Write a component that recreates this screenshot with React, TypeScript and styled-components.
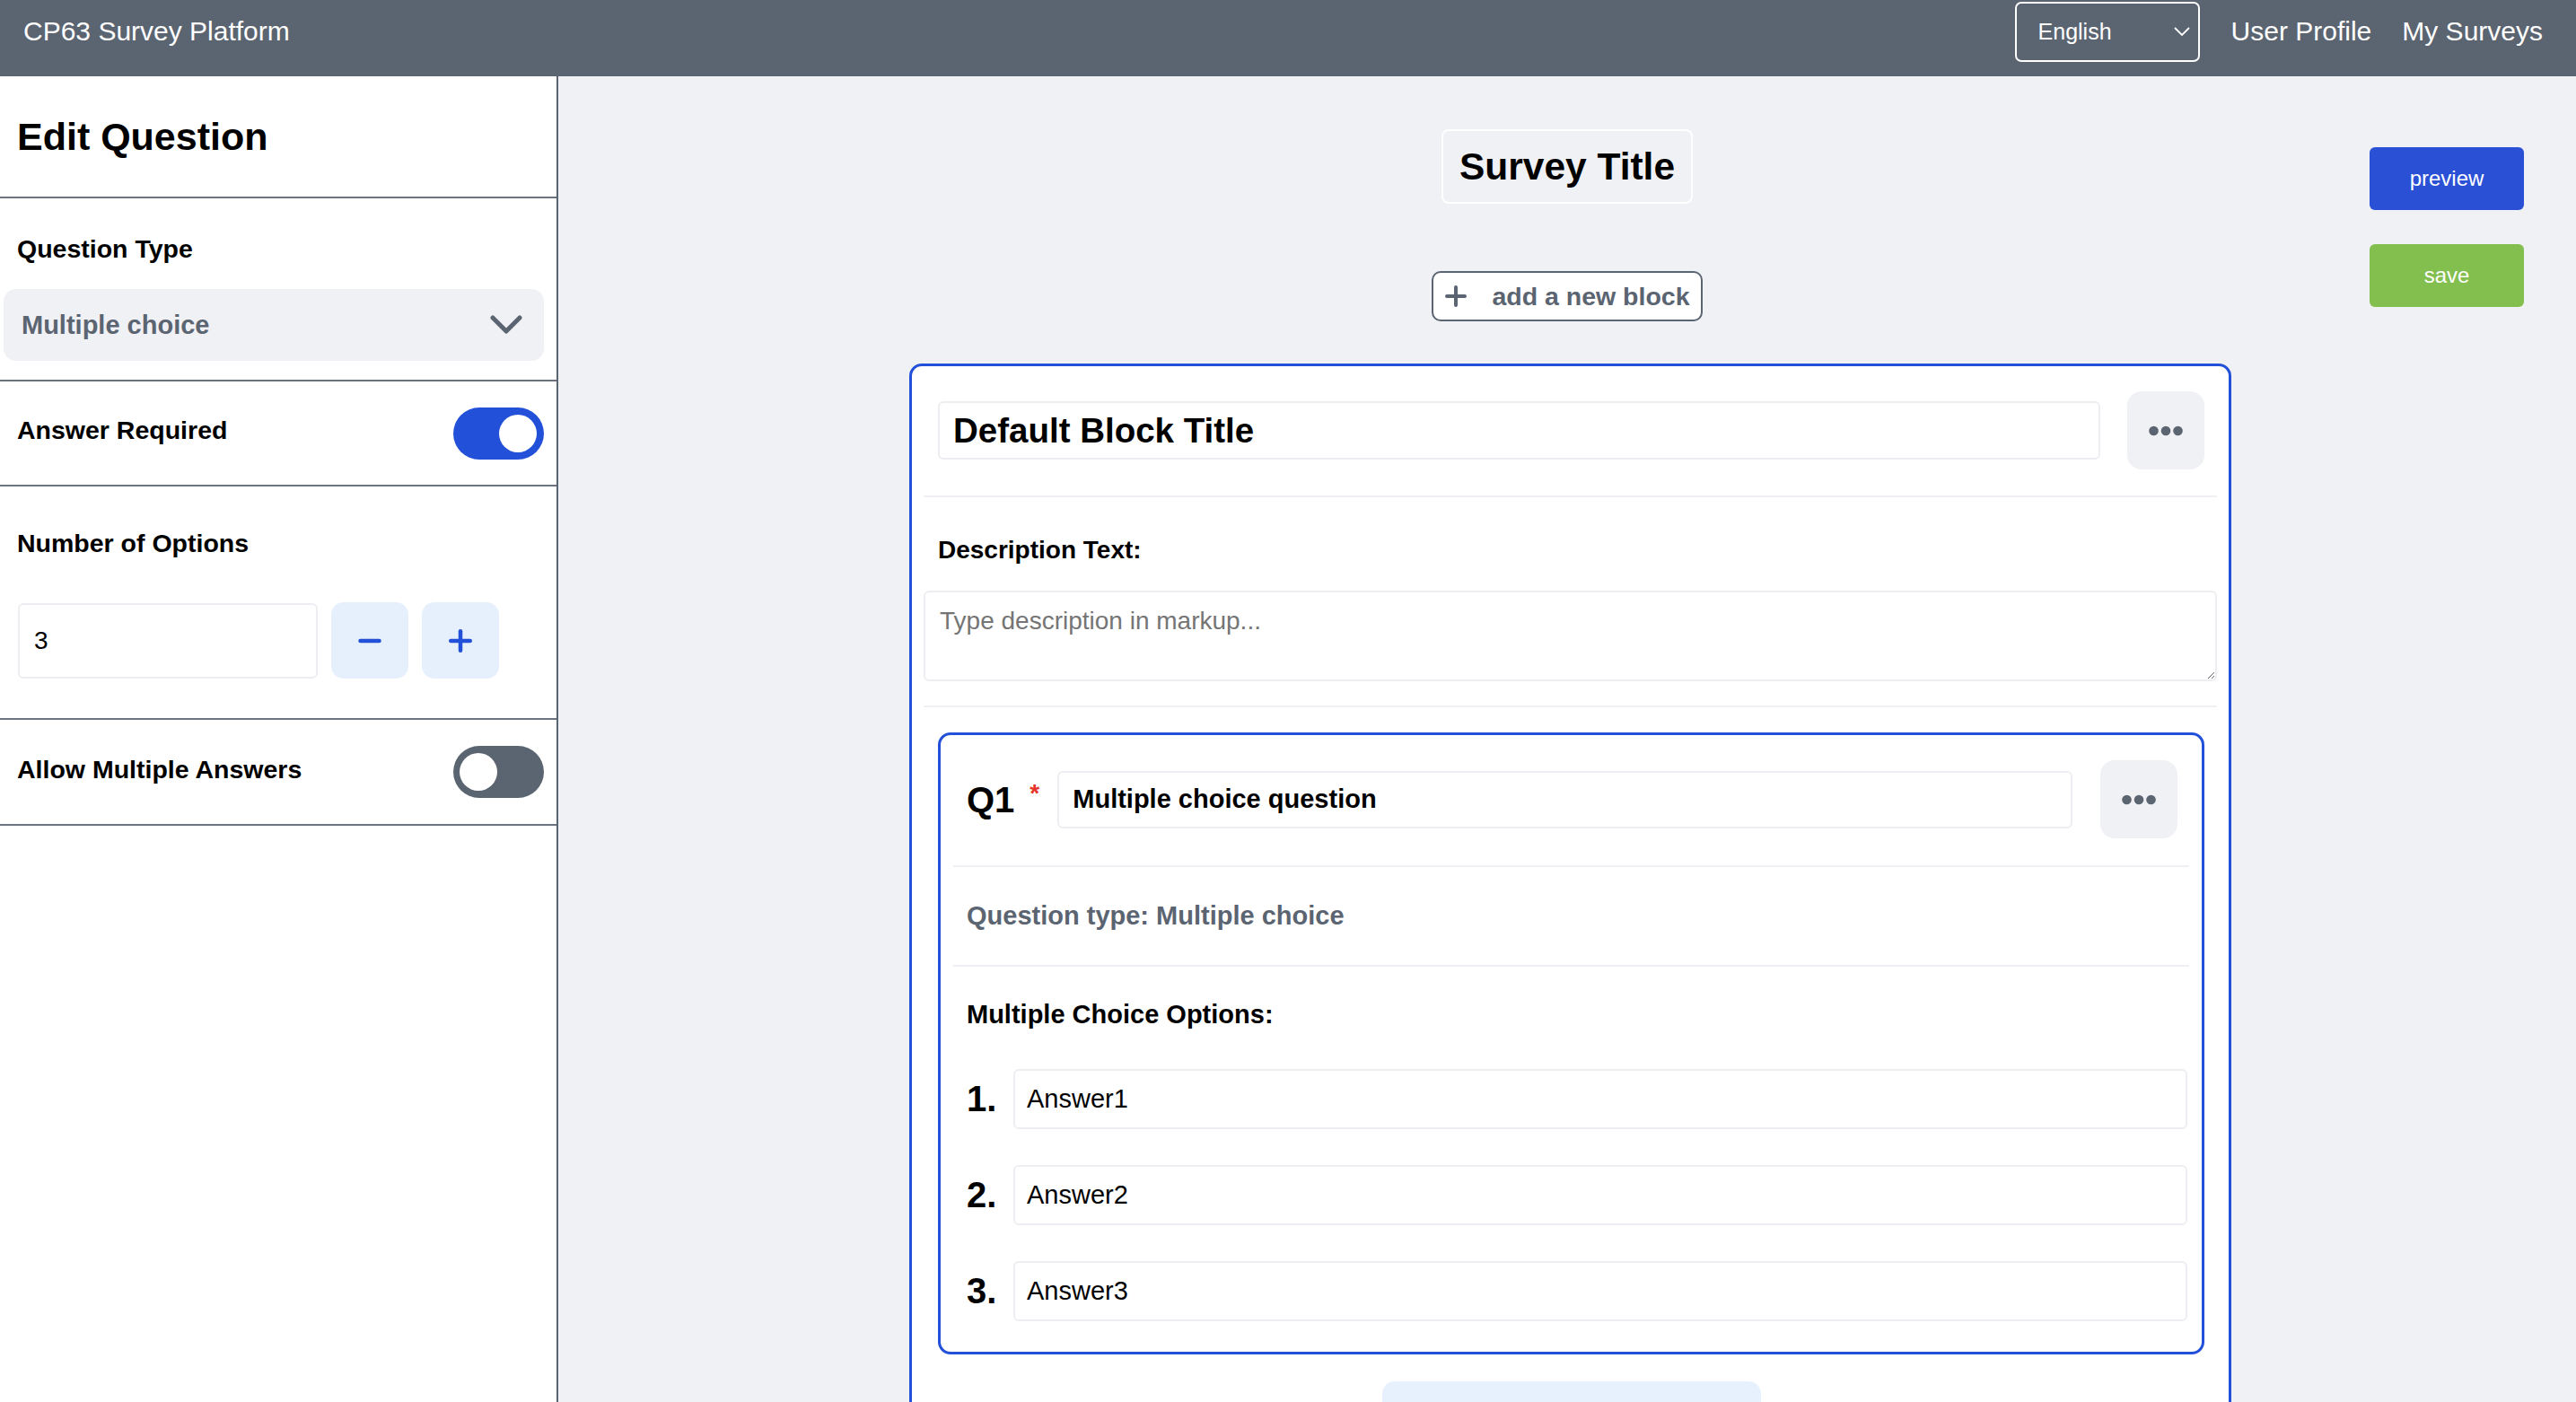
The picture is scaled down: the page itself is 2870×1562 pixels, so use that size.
import React from "react";
import styled, { createGlobalStyle } from "styled-components";

const GlobalStyle = createGlobalStyle`
  html, body { margin: 0; padding: 0; height: 100%; overflow: hidden; }
  body { font-family: "Liberation Sans", Arial, Helvetica, sans-serif; background: #f0f1f5; color: #000; }
  * { box-sizing: border-box; }
  #root { height: 100%; }
`;

const Page = styled.div`
  height: 100vh;
  display: flex;
  flex-direction: column;
`;

/* ---------- top bar ---------- */
const TopBar = styled.header`
  height: 85px;
  flex: none;
  background: #5b6471;
  color: #fff;
  display: flex;
  align-items: center;
  padding: 0 37px 15px 26px;
`;

const Brand = styled.div`
  font-size: 30px;
  line-height: 34px;
`;

const Nav = styled.nav`
  margin-left: auto;
  display: flex;
  align-items: center;
  gap: 34px;
`;

const LangSelect = styled.div`
  width: 206px;
  height: 67px;
  margin-right: 1px;
  border: 2px solid #fff;
  border-radius: 7px;
  display: flex;
  align-items: center;
  justify-content: space-between;
  padding: 0 8px 0 24px;
  font-size: 25px;
`;

const NavLink = styled.a`
  font-size: 30px;
  line-height: 34px;
  color: #fff;
  text-decoration: none;
`;

/* ---------- body ---------- */
const Body = styled.div`
  flex: 1;
  min-height: 0;
  display: flex;
`;

const Sidebar = styled.aside`
  width: 622px;
  flex: none;
  background: #fff;
  border-right: 2px solid #5b6471;
  display: flex;
  flex-direction: column;
`;

const SideHeading = styled.div`
  height: 136px;
  display: flex;
  align-items: center;
  padding-left: 19px;
  border-bottom: 2px solid #6b7380;
  font-size: 43px;
  font-weight: 700;
`;

const SideBlock = styled.div<{ $pad: string }>`
  padding: ${(p) => p.$pad};
  border-bottom: 2px solid #6b7380;
`;

const SideRow = styled.div<{ $h: number }>`
  height: ${(p) => p.$h}px;
  display: flex;
  align-items: center;
  justify-content: space-between;
  padding: 0 14px 0 19px;
  border-bottom: 2px solid #6b7380;
`;

const SideLabel = styled.div<{ $indent?: number; $lift?: number }>`
  font-size: 28.5px;
  line-height: 34px;
  font-weight: 700;
  padding-left: ${(p) => p.$indent ?? 0}px;
  margin-bottom: ${(p) => p.$lift ?? 0}px;
`;

const TypeSelect = styled.div`
  margin-top: 28px;
  height: 80px;
  border-radius: 14px;
  background: #f0f1f5;
  display: flex;
  align-items: center;
  justify-content: space-between;
  padding: 0 24px 0 20px;
  color: #5b6471;
  font-size: 29px;
  font-weight: 700;
`;

const Toggle = styled.span<{ $on: boolean }>`
  position: relative;
  width: 101px;
  height: 58px;
  border-radius: 29px;
  background: ${(p) => (p.$on ? "#2350d8" : "#5b6471")};
  flex: none;
  &::after {
    content: "";
    position: absolute;
    top: 8px;
    left: ${(p) => (p.$on ? "51px" : "7px")};
    width: 42px;
    height: 42px;
    border-radius: 50%;
    background: #fff;
  }
`;

const StepperRow = styled.div`
  margin-top: 49px;
  display: flex;
  align-items: center;
  gap: 15px;
  padding-left: 1px;
`;

const NumberInput = styled.input`
  width: 334px;
  height: 84px;
  border: 2px solid #eceef1;
  border-radius: 6px;
  padding: 0 16px;
  font-family: inherit;
  font-size: 28px;
  color: #000;
  outline: none;
`;

const StepButton = styled.button`
  width: 86px;
  height: 85px;
  border: none;
  border-radius: 14px;
  background: #e6f0fd;
  display: flex;
  align-items: center;
  justify-content: center;
  padding: 0;
`;

/* ---------- main canvas ---------- */
const Main = styled.main`
  flex: 1;
  min-width: 0;
  overflow: hidden;
  background: #f0f1f5;
  display: grid;
  grid-template-columns: 1fr 1473px 1fr;
  align-items: start;
  padding-top: 59px;
`;

const Canvas = styled.div`
  grid-column: 2;
  display: flex;
  flex-direction: column;
  align-items: center;
`;

const SurveyTitle = styled.div`
  height: 83px;
  padding: 0 18px;
  border: 2px solid #fff;
  border-radius: 8px;
  display: flex;
  align-items: center;
  font-size: 42.5px;
  font-weight: 700;
`;

const AddBlockButton = styled.button`
  margin-top: 75px;
  height: 56px;
  padding: 0 12px 0 13px;
  border: 2px solid #5b6471;
  border-radius: 10px;
  background: #fff;
  display: flex;
  align-items: center;
  gap: 28px;
  font-family: inherit;
  font-size: 28.5px;
  font-weight: 700;
  color: #5b6471;
`;

const BlockCard = styled.section`
  margin: 47px 0 0 7px;
  width: 1473px;
  flex: none;
  background: #fff;
  border: 3px solid #2350d8;
  border-radius: 14px;
  padding: 0 13px;
`;

const BlockHeader = styled.div`
  display: flex;
  align-items: center;
  gap: 30px;
  padding: 28px 14px 29px 16px;
  border-bottom: 2px solid #eef0f3;
`;

const TitleInput = styled.input`
  flex: 1;
  min-width: 0;
  height: 65px;
  border: 2px solid #eceef1;
  border-radius: 6px;
  padding: 0 15px;
  font-family: inherit;
  font-size: 38.5px;
  font-weight: 700;
  color: #000;
  outline: none;
`;

const MoreButton = styled.button`
  width: 86px;
  height: 87px;
  flex: none;
  border: none;
  border-radius: 16px;
  background: #f0f1f5;
  display: flex;
  align-items: center;
  justify-content: center;
  padding: 0;
`;

const DescSection = styled.div`
  padding: 42px 0 27px;
  border-bottom: 2px solid #eef0f3;
`;

const FieldLabel = styled.div<{ $indent?: number; $size?: number; $muted?: boolean }>`
  padding-left: ${(p) => p.$indent ?? 0}px;
  font-size: ${(p) => p.$size ?? 28}px;
  line-height: 34px;
  font-weight: 700;
  color: ${(p) => (p.$muted ? "#5b6471" : "#000")};
`;

const DescArea = styled.textarea`
  display: block;
  margin-top: 28px;
  width: 100%;
  height: 101px;
  border: 2px solid #eceef1;
  border-radius: 6px;
  padding: 15px 16px;
  font-family: inherit;
  font-size: 28px;
  line-height: 34px;
  outline: none;
  &::placeholder { color: #757575; }
`;

const QuestionSection = styled.div`
  padding: 28px 14px 0 16px;
  display: flex;
  flex-direction: column;
  align-items: center;
`;

const QuestionCard = styled.div`
  width: 100%;
  border: 3px solid #2350d8;
  border-radius: 14px;
  padding: 0 14px;
`;

const QHeader = styled.div`
  display: flex;
  align-items: center;
  padding: 28px 13px 30px 15px;
  border-bottom: 2px solid #eef0f3;
`;

const QNumber = styled.span`
  font-size: 40px;
  line-height: 46px;
  font-weight: 700;
  flex: none;
`;

const Required = styled.span`
  font-size: 28px;
  line-height: 32px;
  font-weight: 700;
  color: #e5352b;
  vertical-align: top;
  margin-left: 17px;
`;

const QInput = styled.input`
  flex: 1;
  min-width: 0;
  height: 64px;
  margin: 0 31px 0 20px;
  border: 2px solid #eceef1;
  border-radius: 6px;
  padding: 0 15px;
  font-family: inherit;
  font-size: 29px;
  font-weight: 700;
  color: #000;
  outline: none;
`;

const QTypeSection = styled.div`
  padding: 37px 0 38px 15px;
  border-bottom: 2px solid #eef0f3;
`;

const OptionsSection = styled.div`
  padding: 36px 2px 34px 15px;
`;

const OptionList = styled.ol`
  list-style: none;
  margin: 44px 0 0;
  padding: 0;
  display: flex;
  flex-direction: column;
  gap: 40px;
`;

const OptionRow = styled.li`
  display: flex;
  align-items: center;
`;

const OptionNum = styled.span`
  width: 52px;
  flex: none;
  font-size: 40px;
  font-weight: 700;
`;

const OptionInput = styled.input`
  flex: 1;
  min-width: 0;
  height: 67px;
  border: 2px solid #eceef1;
  border-radius: 6px;
  padding: 0 13px;
  font-family: inherit;
  font-size: 29px;
  color: #000;
  outline: none;
`;

const AddQuestionButton = styled.button`
  margin-top: 30px;
  width: 422px;
  height: 80px;
  border: none;
  border-radius: 14px;
  background: #e7f1fd;
`;

const Actions = styled.div`
  grid-column: 3;
  justify-self: end;
  margin: 20px 58px 0 0;
  display: flex;
  flex-direction: column;
  gap: 38px;
`;

const ActionButton = styled.button<{ $tone: "blue" | "green" }>`
  width: 172px;
  height: 70px;
  border: none;
  border-radius: 6px;
  background: ${(p) => (p.$tone === "blue" ? "#2a50d6" : "#83bf4f")};
  color: #fff;
  font-family: inherit;
  font-size: 24px;
`;

/* ---------- icons ---------- */
const Dots = () => (
  <svg width="38" height="12" viewBox="0 0 38 12">
    <circle cx="5.5" cy="6" r="5.3" fill="#5b6471" />
    <circle cx="19" cy="6" r="5.3" fill="#5b6471" />
    <circle cx="32.5" cy="6" r="5.3" fill="#5b6471" />
  </svg>
);

const ThinChevron = () => (
  <svg width="20" height="12" viewBox="0 0 20 12">
    <polyline points="2,2 10,10 18,2" fill="none" stroke="#fff" strokeWidth="1.8" />
  </svg>
);

const BoldChevron = () => (
  <svg width="36" height="22" viewBox="0 0 36 22">
    <polyline points="3,3 18,18 33,3" fill="none" stroke="#5b6471" strokeWidth="5" strokeLinecap="round" strokeLinejoin="round" />
  </svg>
);

const PlusIcon = ({ color, size, stroke }: { color: string; size: number; stroke: number }) => (
  <svg width={size} height={size} viewBox={`0 0 ${size} ${size}`}>
    <line x1={size / 2} y1={stroke / 2} x2={size / 2} y2={size - stroke / 2} stroke={color} strokeWidth={stroke} strokeLinecap="round" />
    <line x1={stroke / 2} y1={size / 2} x2={size - stroke / 2} y2={size / 2} stroke={color} strokeWidth={stroke} strokeLinecap="round" />
  </svg>
);

const MinusIcon = () => (
  <svg width="26" height="6" viewBox="0 0 26 6">
    <line x1="2.5" y1="3" x2="23.5" y2="3" stroke="#2350d8" strokeWidth="4.5" strokeLinecap="round" />
  </svg>
);

const options = ["Answer1", "Answer2", "Answer3"];

export default function App() {
  return (
    <>
      <GlobalStyle />
      <Page>
        <TopBar>
          <Brand>CP63 Survey Platform</Brand>
          <Nav>
            <LangSelect>
              English
              <ThinChevron />
            </LangSelect>
            <NavLink href="#">User Profile</NavLink>
            <NavLink href="#">My Surveys</NavLink>
          </Nav>
        </TopBar>

        <Body>
          <Sidebar>
            <SideHeading>Edit Question</SideHeading>

            <SideBlock $pad="39px 14px 21px 4px">
              <SideLabel $indent={15}>Question Type</SideLabel>
              <TypeSelect>
                Multiple choice
                <BoldChevron />
              </TypeSelect>
            </SideBlock>

            <SideRow $h={117}>
              <SideLabel $lift={8}>Answer Required</SideLabel>
              <Toggle $on={true} />
            </SideRow>

            <SideBlock $pad="46px 14px 44px 19px">
              <SideLabel>Number of Options</SideLabel>
              <StepperRow>
                <NumberInput value="3" readOnly />
                <StepButton aria-label="decrease">
                  <MinusIcon />
                </StepButton>
                <StepButton aria-label="increase">
                  <PlusIcon color="#2350d8" size={26} stroke={4.5} />
                </StepButton>
              </StepperRow>
            </SideBlock>

            <SideRow $h={118}>
              <SideLabel $lift={6}>Allow Multiple Answers</SideLabel>
              <Toggle $on={false} />
            </SideRow>
          </Sidebar>

          <Main>
            <Canvas>
              <SurveyTitle>Survey Title</SurveyTitle>
              <AddBlockButton>
                <PlusIcon color="#5b6471" size={24} stroke={4} />
                add a new block
              </AddBlockButton>

              <BlockCard>
                <BlockHeader>
                  <TitleInput value="Default Block Title" readOnly />
                  <MoreButton aria-label="more">
                    <Dots />
                  </MoreButton>
                </BlockHeader>

                <DescSection>
                  <FieldLabel $indent={16}>Description Text:</FieldLabel>
                  <DescArea placeholder="Type description in markup..." />
                </DescSection>

                <QuestionSection>
                  <QuestionCard>
                    <QHeader>
                      <QNumber>
                        Q1
                        <Required>*</Required>
                      </QNumber>
                      <QInput value="Multiple choice question" readOnly />
                      <MoreButton aria-label="more">
                        <Dots />
                      </MoreButton>
                    </QHeader>

                    <QTypeSection>
                      <FieldLabel $size={29} $muted>
                        Question type: Multiple choice
                      </FieldLabel>
                    </QTypeSection>

                    <OptionsSection>
                      <FieldLabel $size={29}>Multiple Choice Options:</FieldLabel>
                      <OptionList>
                        {options.map((o, i) => (
                          <OptionRow key={o}>
                            <OptionNum>{i + 1}.</OptionNum>
                            <OptionInput value={o} readOnly />
                          </OptionRow>
                        ))}
                      </OptionList>
                    </OptionsSection>
                  </QuestionCard>
                  <AddQuestionButton aria-label="add a new question" />
                </QuestionSection>
              </BlockCard>
            </Canvas>

            <Actions>
              <ActionButton $tone="blue">preview</ActionButton>
              <ActionButton $tone="green">save</ActionButton>
            </Actions>
          </Main>
        </Body>
      </Page>
    </>
  );
}
